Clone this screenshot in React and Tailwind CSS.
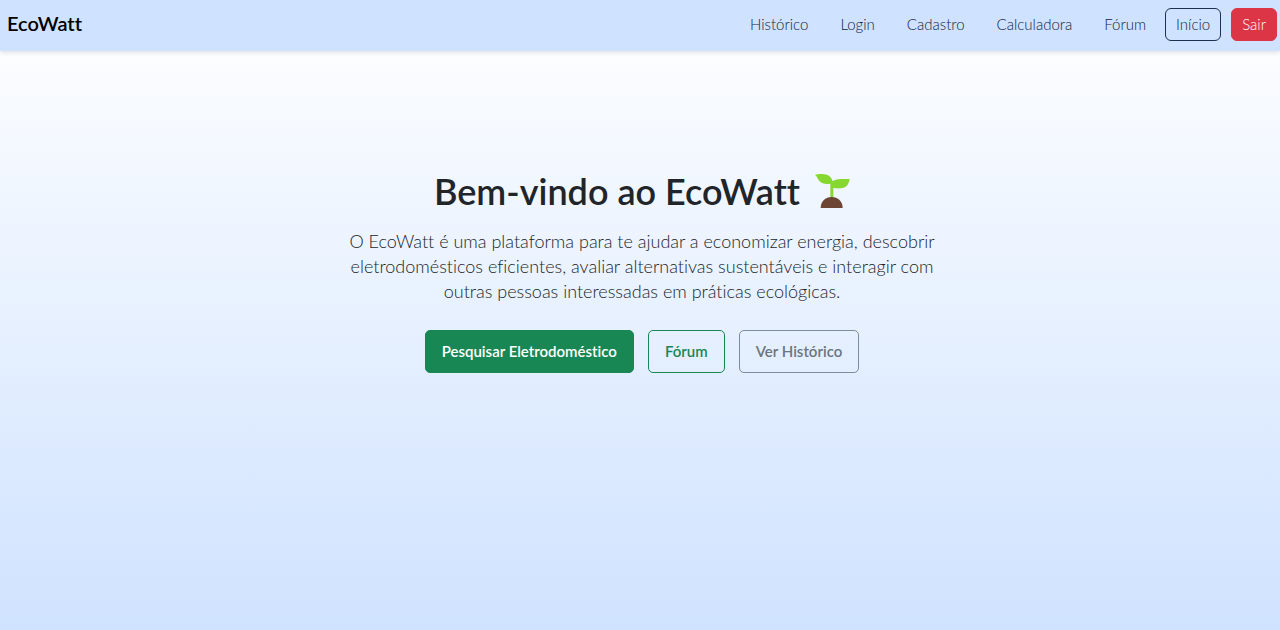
const links = ['Histórico', 'Login', 'Cadastro', 'Calculadora', 'Fórum'];

function Seedling() {
  return (
    <svg viewBox="0 0 105 105" className="size-[35px]" role="img" aria-label="Muda de planta">
      <path
        fill="#86d72f"
        d="M0 2C8 0 18 0 27 1C40 2 50 9 53 22C60 17 68 15 78 15H104C102 30 94 42 78 43C70 44 62 43 55 42V76H46V29C32 31 20 29 13 21C8 15 7 8 0 2Z"
      />
      <path fill="#6d4534" d="M17 102C17 83 31 69 50 69S83 83 83 102Z" />
    </svg>
  );
}

function Action({ className, children }) {
  return (
    <button
      type="button"
      className={`h-[43px] cursor-pointer rounded-[5px] border px-4 text-[15px] font-semibold ${className}`}
    >
      {children}
    </button>
  );
}

export default function App() {
  return (
    <div className="flex min-h-screen flex-col bg-linear-to-b from-white to-[#cfe2ff] font-['Lato','Open_Sans',sans-serif] text-[#212529] [font-variant-ligatures:none]">
      <header className="flex min-h-[51px] items-center justify-between bg-[#cfe2ff] pb-0.5 pl-[7px] pr-[3px] shadow-[0_2px_4px_rgba(0,0,0,0.1)]">
        <a href="#" className="pb-1 text-xl font-semibold text-black">EcoWatt</a>
        <nav className="flex items-center text-[15px] font-light text-[#12263f]">
          <ul className="mr-[19px] flex items-center gap-8">
            {links.map((label) => (
              <li key={label}>
                <a href="#">{label}</a>
              </li>
            ))}
          </ul>
          <div className="flex items-center gap-2.5">
            <button type="button" className="h-[33px] cursor-pointer rounded-md border border-[#1f2f4d] px-2.5">
              Início
            </button>
            <button type="button" className="h-[33px] cursor-pointer rounded-md border border-[#dc3545] bg-[#dc3545] px-2.5 text-white">
              Sair
            </button>
          </div>
        </nav>
      </header>
      <main className="mx-auto flex w-full max-w-[600px] flex-col items-center pl-1 pt-[118px] text-center">
        <h1 className="flex items-center gap-[15px] text-[36px] leading-[44px] font-semibold">
          Bem-vindo ao EcoWatt
          <Seedling />
        </h1>
        <p className="mt-4 text-[18px] leading-[25px] font-light">
          O EcoWatt é uma plataforma para te ajudar a economizar energia, descobrir
          eletrodomésticos eficientes, avaliar alternativas sustentáveis e interagir com
          outras pessoas interessadas em práticas ecológicas.
        </p>
        <div className="mt-[26px] flex flex-wrap justify-center gap-3.5">
          <Action className="border-[#198754] bg-[#198754] text-white">Pesquisar Eletrodoméstico</Action>
          <Action className="border-[#198754] text-[#198754]">Fórum</Action>
          <Action className="border-[#7f8c9b] text-[#6c757d]">Ver Histórico</Action>
        </div>
      </main>
    </div>
  );
}
